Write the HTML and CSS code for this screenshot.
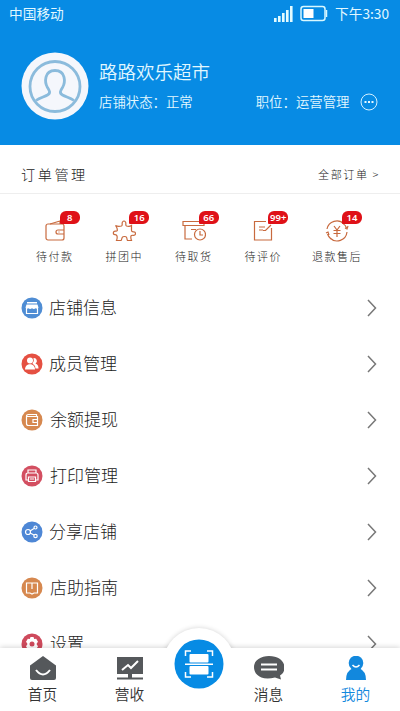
FILE: index.html
```html
<!DOCTYPE html>
<html lang="zh-CN">
<head>
<meta charset="utf-8">
<title>我的</title>
<link rel="stylesheet" href="styles.css">
</head>
<body>
<div class="app">
  <header class="hero">
    <div class="status">
      <span class="carrier">中国移动</span>
      <svg class="signal" width="20" height="18" viewBox="0 0 20 18" fill="#e2fbff"><path d="M0 13h2.600v4H0zM4 11h2.600v6H4zM8 8h2.600v9H8zM12 5h2.600v12H12zM16 1h2.600v16H16z"/></svg>
      <svg class="battery" width="28" height="18" viewBox="0 0 28 18"><rect x="1" y="1.500" width="24" height="14" rx="2.500" fill="none" stroke="#d8f8ff" stroke-width="1.500"/><rect x="3.500" y="4" width="10" height="9" fill="#fff"/><path d="M26.500 5v7" stroke="#d8f8ff" stroke-width="1.500"/></svg>
      <span class="time">下午3:30</span>
    </div>
    <div class="profile">
      <svg class="avatar" width="68" height="68" viewBox="0 0 68 68"><circle cx="34" cy="34" r="33.500" fill="#f5f7fc"/><g fill="none" stroke="#8bbbdc" stroke-width="2.800"><circle cx="34" cy="34.500" r="25"/><path d="M15 48.500c4-3 8-3.500 11.500-5.500 3.500-2 2-4.500 0-7.500-3-5-3.500-17 7.500-17s10.500 12 7.500 17c-2 3-3.500 5.500 0 7.500 3.500 2 7.500 2.500 11.500 5.500"/></g></svg>
      <div class="info">
        <h1>路路欢乐超市</h1>
        <div class="meta"><span>店铺状态：正常</span><span class="role">职位：运营管理</span>
          <svg width="18" height="18" viewBox="0 0 18 18"><circle cx="9" cy="9" r="8" fill="none" stroke="#d4f0ff"/><path d="M4.500 8h2v2h-2zM8 8h2v2H8zM11.500 8h2v2h-2z" fill="#e5f8ff"/></svg>
        </div>
      </div>
    </div>
  </header>
  <section class="orders">
    <div class="orders-head"><h2>订单管理</h2><span class="all">全部订单 &gt;</span></div>
    <div class="order-list">
      <div class="order"><div class="pic"><svg width="24" height="24" viewBox="0 0 24 24"><rect x="3" y="5" width="18" height="16" rx="2"/><path d="M7 5l10-3v3M21 11h-6a2 2 0 0 0 0 4h6M15.500 13h1"/></svg><b class="badge">8</b></div><span>待付款</span></div>
      <div class="order"><div class="pic"><svg width="24" height="24" viewBox="0 0 24 24"><path d="M3.500 6.500Q6 8 9.500 7C11 6 9.500 4.500 10.500 3q1.500-2 3 0c1 1.500-.5 3 1 4q3 1 5-.5v5c0 2 2 1 3.200 1.500q1.600 1.500 0 3c-1.200 1-2.700-.5-3.700.8q-.5 2.200.5 4.700h-4c-1-1 0-3-1.500-3.700q-1.500-.6-3 0C9.500 18.500 10 20.500 9 21.500H4.500q1-2.500.5-4.500c-.5-2-2.500-1-3.500-2q-.5-1.500.5-2.500c1-1 2.500.5 3.300-1q.2-2.500-1.800-5z"/></svg><b class="badge">16</b></div><span>拼团中</span></div>
      <div class="order"><div class="pic"><svg width="24" height="24" viewBox="0 0 24 24"><path d="M1 2.500h21v4H1zM3 7v13h7M9 10.500h5"/><circle cx="18" cy="15.500" r="5.500"/><path d="M18 12v4h3"/></svg><b class="badge">66</b></div><span>待取货</span></div>
      <div class="order"><div class="pic"><svg width="24" height="24" viewBox="0 0 24 24"><path d="M15 2.500H3.500v18.500h17V9M8 8h6M8 11h4M12 11.500h2.500L20 6"/></svg><b class="badge">99+</b></div><span>待评价</span></div>
      <div class="order last"><div class="pic"><svg width="24" height="24" viewBox="0 0 24 24"><path d="M2 10a10 10 0 0 1 17-5M22 13a10 10 0 0 1-17 6M2.500 15q1 3 3.500 5M21.500 9q-1-3-3-4M1 14l2-1 1 3M20 9l2 1 1-3M9 7l3 4 3-4M8.500 11.500h7M8.500 14.500h7M12 11v7"/></svg><b class="badge">14</b></div><span>退款售后</span></div>
    </div>
  </section>
  <main class="menu">
    <div class="row"><svg class="ico" viewBox="0 0 22 22"><circle cx="11" cy="11" r="10.500" fill="#4f8dd4"/><path d="M6 5h10v1.500H6zM5.500 7.500h11l1 3q-1 2-2.800.8-1.800 1.500-3.700 0-1.900 1.500-3.700 0-1.800 1.200-2.800-.8z" fill="#fff"/><path d="M5.500 11v5.500h11V11" class="ln"/></svg><span>店铺信息</span><svg class="arrow" viewBox="0 0 10 18"><path d="M1 1l7.500 8L1 17"/></svg></div>
    <div class="row"><svg class="ico" viewBox="0 0 22 22"><circle cx="11" cy="11" r="10.500" fill="#e55042"/><path d="M12.500 5a3 3 0 0 1 2 5.500q3 1 3 5h-3q0-3-3-5 2-3 1-5.500z" fill="#fff"/><circle cx="9" cy="7.500" r="3" fill="#fff"/><path d="M4 16.500c0-7 10-7 10 0z" fill="#fff"/></svg><span>成员管理</span><svg class="arrow" viewBox="0 0 10 18"><path d="M1 1l7.500 8L1 17"/></svg></div>
    <div class="row"><svg class="ico" viewBox="0 0 22 22"><circle cx="11" cy="11" r="10.500" fill="#d6884f"/><path class="ln" d="M15.500 7.500V5.500h-8q-2 0-2 2v7q0 2 2 2h9v-9H6M16.500 10.500h-4.500v3h4.500"/></svg><span class="in">余额提现</span><svg class="arrow" viewBox="0 0 10 18"><path d="M1 1l7.500 8L1 17"/></svg></div>
    <div class="row"><svg class="ico" viewBox="0 0 22 22"><circle cx="11" cy="11" r="10.500" fill="#d34f61"/><path class="ln" d="M7 8V5h8v3M7 15H5V10q0-2 2-2h8q2 0 2 2v5h-2M7.500 12h7v4.500h-7zM9 14h4"/></svg><span class="in">打印管理</span><svg class="arrow" viewBox="0 0 10 18"><path d="M1 1l7.500 8L1 17"/></svg></div>
    <div class="row"><svg class="ico" viewBox="0 0 22 22"><circle cx="11" cy="11" r="10.500" fill="#4e87d5"/><g class="ln"><circle cx="7" cy="11" r="2.500"/><circle cx="14.500" cy="6.500" r="1.500"/><circle cx="14.500" cy="15" r="1.700"/><path d="M9 10l4-2.500M9 12l4 2"/></g></svg><span>分享店铺</span><svg class="arrow" viewBox="0 0 10 18"><path d="M1 1l7.500 8L1 17"/></svg></div>
    <div class="row"><svg class="ico" viewBox="0 0 22 22"><circle cx="11" cy="11" r="10.500" fill="#d6884f"/><path class="ln" d="M8.500 6H5.500v10H9l2 1 2-1h3.500V6h-3M11 6v6M8.500 6h5"/></svg><span class="in">店助指南</span><svg class="arrow" viewBox="0 0 10 18"><path d="M1 1l7.500 8L1 17"/></svg></div>
    <div class="row"><svg class="ico" viewBox="0 0 22 22"><circle cx="11" cy="11" r="10.500" fill="#ce4a5c"/><path d="M9.500 4h3l.7 2 2-.3 1.800 3-1.300 1.800v1l1.300 1.800-1.800 3-2-.3-.7 2h-3l-.7-2-2 .3-1.800-3L6.300 11.500v-1L5 8.700l1.800-3 2 .3z" fill="#fff"/><circle cx="11" cy="11" r="2.500" fill="#ce4a5c"/></svg><span class="in">设置</span><svg class="arrow" viewBox="0 0 10 18"><path d="M1 1l7.500 8L1 17"/></svg></div>
  </main>
  <nav class="tabs">
    <div class="tab"><svg width="28" height="26" viewBox="0 0 28 26"><path d="M14 0L27 9.500V22q0 2-2 2H3q-2 0-2-2V9.500z" fill="#55585b"/><path d="M7 14q7 9 14 0" class="ln"/></svg><span>首页</span></div>
    <div class="tab"><svg width="28" height="26" viewBox="0 0 28 26"><path d="M1 1h26v17H1zM1 21.500h26V23.500H1zM12 18h4v4h-4z" fill="#55585b"/><path d="M6 14l6-5 3 3 7-7" class="ln"/></svg><span>营收</span></div>
    <div class="scan"><svg width="72" height="72" viewBox="0 0 72 72"><circle cx="36" cy="36" r="24.500" fill="#078be4"/><rect x="26.500" y="26" width="19" height="8.500" rx="1" fill="#fff"/><rect x="26.500" y="38" width="19" height="8.500" rx="1" fill="#fff"/><path d="M22.500 28v-5H28M44 23h5.500v5M22.500 44v5H28M44 49h5.500v-5M22 36.300h28" class="ln"/></svg></div>
    <div class="tab msg"><svg width="30" height="26" viewBox="0 0 30 26"><path d="M15 0c17 0 19 15 11 19.500l1 4-6-2C6 25 0 18 0 11 0 4 7 0 15 0z" fill="#55585b"/><path d="M7 8.500h16M7 13.500h16" class="ln"/></svg><span>消息</span></div>
    <div class="tab on"><svg width="28" height="26" viewBox="0 0 28 26"><circle cx="14" cy="7" r="7.300" fill="#1288dd"/><path d="M4 24q0-9 7-12h6q7 3 7 12z" fill="#1288dd"/><path d="M10.500 9q3.500 4 7 0" class="ln thin"/></svg><span>我的</span></div>
  </nav>
</div>
</body>
</html>
```
FILE: styles.css
```css
* { box-sizing: border-box; }
body { margin: 0; font-family: "Noto Sans CJK SC", sans-serif; font-weight: 300; color: #222; background: #fff; }
h1, h2 { margin: 0; font-weight: inherit; }
svg { display: block; flex: none; }
.app { width: 400px; height: 711px; overflow: hidden; display: flex; flex-direction: column; }
.hero { flex: none; height: 145px; background: #078be4; color: #e2f8ff; font-weight: 400; }
.status { height: 27px; display: flex; align-items: center; padding: 0 11px 0 9px; font-size: 13.700px; white-space: nowrap; }
.carrier, .time { margin-bottom: 1px; }
.signal { margin-left: auto; }
.battery { margin-left: 6px; }
.time { margin-left: 7px; }
.profile { display: flex; padding: 25px 0 0 21px; }
.info { margin-left: 10px; flex: 1; }
h1 { font-size: 18.500px; line-height: 26px; margin-top: 6px; font-weight: 350; }
.meta { display: flex; align-items: center; font-size: 13.400px; line-height: 20px; margin-top: 7px; font-weight: 350; white-space: nowrap; }
.meta span { margin-bottom: 1px; }
.role { margin-left: 63px; }
.meta svg { margin-left: 11px; }
.orders { flex: none; height: 135px; }
.orders-head { height: 49px; padding: 10px 20px 0 21px; display: flex; align-items: center; justify-content: space-between; border-bottom: 1px solid #eee; }
h2 { font-size: 14.200px; letter-spacing: 2.500px; }
.all { font-size: 11px; letter-spacing: 1.600px; }
.order-list { display: flex; padding: 25px 0 0 20px; }
.order { width: 69.500px; display: flex; flex-direction: column; align-items: center; font-size: 11px; letter-spacing: 1.500px; white-space: nowrap; }
.order.last { width: 78px; }
.order span { line-height: 16px; margin-top: 5px; }
.pic { position: relative; }
.pic svg { fill: none; stroke: #c86a3e; stroke-width: 1.200; }
.badge { position: absolute; left: 17px; top: -8px; width: 20px; height: 13px; border-radius: 6px 6px 6px 1px; background: #df1118; color: #fff; font: 600 9.500px/13px "Noto Sans", sans-serif; letter-spacing: 0; text-align: center; }
.menu { flex: 1; min-height: 0; overflow: hidden; }
.row { height: 56px; display: flex; align-items: center; padding: 0 23px 0 21px; font-size: 17px; }
.row span { margin: 0 0 3px 6px; }
.row .in { margin-left: 7px; }
.ico { width: 22px; height: 22px; }
.arrow { width: 10px; height: 18px; margin-left: auto; fill: none; stroke: #777; stroke-width: 1.500; }
.ln { fill: none; stroke: #fff; stroke-width: 1.200; }
.tabs { flex: none; height: 63px; display: flex; background: #fff; box-shadow: 0 -1px 5px rgba(0,0,0,.16); }
.tab { width: 87px; padding-top: 8px; display: flex; flex-direction: column; align-items: center; font-size: 14.700px; line-height: 20px; font-weight: 350; color: #333; }
.tab:first-child { margin-left: -1px; }
.tab span { margin-top: 2px; }
.tab .ln { stroke-width: 2; }
.tab .thin { stroke-width: 1.500; }
.tab.on { color: #1288dd; }
.tab.msg { margin-left: -10px; }
.scan { position: relative; flex: none; width: 72px; height: 72px; margin: -20px 0 0 -10px; }
.scan::before { content: ""; position: absolute; inset: 0; border-radius: 50%; background: #fff; box-shadow: 0 0 5px rgba(0,0,0,.18); clip-path: inset(-6px -6px 52px -6px); }
.scan svg { position: relative; }
.scan .ln { stroke-width: 1.500; }
```
